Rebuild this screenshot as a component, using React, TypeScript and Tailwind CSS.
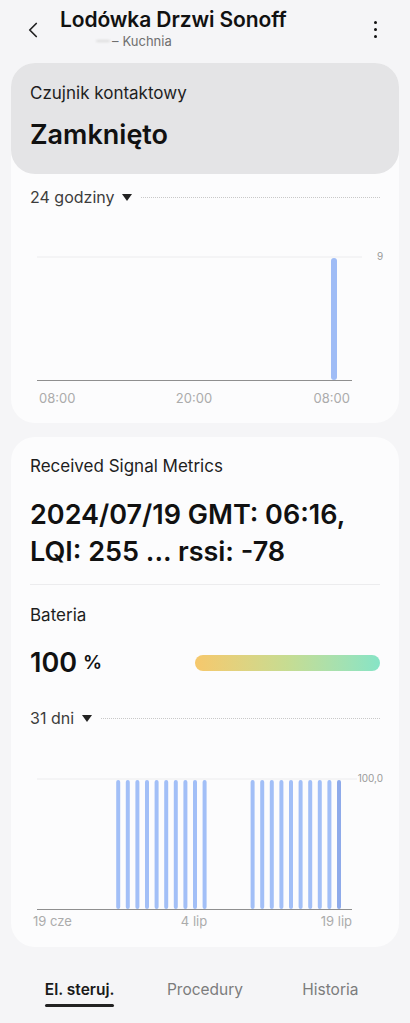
import { ChevronLeft } from "lucide-react"

const font = { fontFamily: "Inter, 'Noto Sans', sans-serif" }

function Dropdown({ label, dotStart }: { label: string; dotStart: string }) {
  return (
    <div className="flex items-center h-5 text-[#3c3c3c]">
      <span className="text-[16px] leading-5">{label}</span>
      <svg width="10" height="7" viewBox="0 0 10 7" className="ml-[8px]">
        <path d="M0 0 L10 0 L5 7 Z" fill="#222" />
      </svg>
      <div className={`flex-1 border-t border-dotted border-[#c8c8c8] ${dotStart}`} />
    </div>
  )
}

function DayChart() {
  return (
    <svg width="388" height="203" className="block" style={font}>
      <line x1="26" y1="50" x2="351" y2="50" stroke="#ececee" strokeWidth="1" />
      <text x="369" y="53" fontSize="10" fill="#9a9a9a" textAnchor="middle">9</text>
      <rect x="320" y="51" width="6" height="122" rx="3" fill="#9fbcf6" />
      <line x1="26" y1="173.5" x2="341" y2="173.5" stroke="#8f8f8f" strokeWidth="1.2" />
      <text x="28" y="196" fontSize="13" fill="#ababab">08:00</text>
      <text x="183" y="196" fontSize="13" fill="#ababab" textAnchor="middle">20:00</text>
      <text x="339" y="196" fontSize="13" fill="#ababab" textAnchor="end">08:00</text>
    </svg>
  )
}

const days = [7, 8, 9, 10, 11, 12, 13, 14, 15, 16, 21, 22, 23, 24, 25, 26, 27, 28, 29, 30]

function MonthChart() {
  return (
    <svg width="388" height="206" className="block" style={font}>
      <line x1="26" y1="51" x2="346" y2="51" stroke="#ececee" strokeWidth="1" />
      <text x="372" y="54" fontSize="10" fill="#9a9a9a" textAnchor="end">100,0</text>
      {days.map((d) => (
        <rect
          key={d}
          x={38 + 9.6 * d}
          y="52"
          width="4"
          height="129"
          rx="2"
          fill={d === 30 ? "#8eaaea" : "#a2bff7"}
        />
      ))}
      <line x1="26" y1="181.5" x2="341" y2="181.5" stroke="#8f8f8f" strokeWidth="1.2" />
      <text x="22" y="198" fontSize="13" fill="#ababab">19 cze</text>
      <text x="183" y="198" fontSize="13" fill="#ababab" textAnchor="middle">4 lip</text>
      <text x="341" y="198" fontSize="13" fill="#ababab" textAnchor="end">19 lip</text>
    </svg>
  )
}

export default function App() {
  return (
    <div className="w-[410px] h-[1023px] bg-[#f5f5f7] text-[#111] overflow-hidden" style={font}>
      {/* Header */}
      <div className="h-[63px] flex items-start relative">
        <ChevronLeft size={26} strokeWidth={1.6} className="absolute left-[20px] top-[17px] text-[#222]" />
        <div className="ml-[60px] pt-[6px]">
          <div className="text-[21px] leading-7 font-semibold tracking-[-0.1px]">Lodówka Drzwi Sonoff</div>
          <div className="flex items-center ml-[36px] -mt-[1px] text-[13px] leading-4 text-[#6f6f6f]">
            <span className="w-[14px] h-[2px] bg-[#dcdcdc] rounded-full blur-[1px] mr-[2px]" />
            <span className="mr-[4px]">–</span>
            <span>Kuchnia</span>
          </div>
        </div>
        <div className="absolute right-[33px] top-[21px] flex flex-col gap-[4px]">
          <span className="w-[3px] h-[3px] rounded-full bg-[#111]" />
          <span className="w-[3px] h-[3px] rounded-full bg-[#111]" />
          <span className="w-[3px] h-[3px] rounded-full bg-[#111]" />
        </div>
      </div>

      {/* Contact sensor card */}
      <div className="mx-[11px] rounded-[24px] bg-[#fcfcfd]">
        <div className="h-[111px] rounded-[24px] bg-[#e4e4e6] px-[19px] pt-[20px]">
          <div className="text-[17px] leading-5 text-[#1e1e1e]">Czujnik kontaktowy</div>
          <div className="mt-[16px] text-[27px] leading-8 font-semibold">Zamknięto</div>
        </div>
        <div className="px-[19px] pt-[13px]">
          <Dropdown label="24 godziny" dotStart="ml-[9px]" />
        </div>
        <DayChart />
        <div className="h-[13px]" />
      </div>

      {/* Signal + battery card */}
      <div className="mx-[11px] mt-[14px] rounded-[24px] bg-[#fcfcfd] pt-[19px]">
        <div className="px-[19px]">
          <div className="text-[17px] leading-5 text-[#1e1e1e]">Received Signal Metrics</div>
          <div className="mt-[20px] text-[27px] leading-[37px] font-semibold">
            2024/07/19 GMT: 06:16,
            <br />
            LQI: 255 ... rssi: -78
          </div>
          <div className="mt-[14px] h-px bg-[#ececee]" />
          <div className="mt-[20px] text-[17px] leading-5 text-[#1e1e1e]">Bateria</div>
          <div className="mt-[20px] h-9 flex items-center">
            <span className="text-[27px] font-semibold">100</span>
            <span className="ml-[6px] text-[19px] font-semibold">%</span>
            <div className="ml-auto w-[185px] h-[16px] rounded-full bg-linear-to-r from-[#f6c86c] via-[#c6dc92] to-[#86e4c6]" />
          </div>
          <div className="mt-[27px]">
            <Dropdown label="31 dni" dotStart="ml-[9px]" />
          </div>
        </div>
        <MonthChart />
        <div className="h-[13px]" />
      </div>

      {/* Bottom tabs */}
      <div className="grid grid-cols-3 px-[17px] mt-[33px] text-[15.5px]">
        <div className="flex justify-center">
          <div className="flex flex-col items-center">
            <span className="font-semibold text-[#1a1a1a] leading-5">El. steruj.</span>
            <span className="mt-[4px] h-[3px] w-full rounded-full bg-[#222]" />
          </div>
        </div>
        <div className="text-center text-[#7c7c7c] leading-5">Procedury</div>
        <div className="text-center text-[#7c7c7c] leading-5">Historia</div>
      </div>
    </div>
  )
}
